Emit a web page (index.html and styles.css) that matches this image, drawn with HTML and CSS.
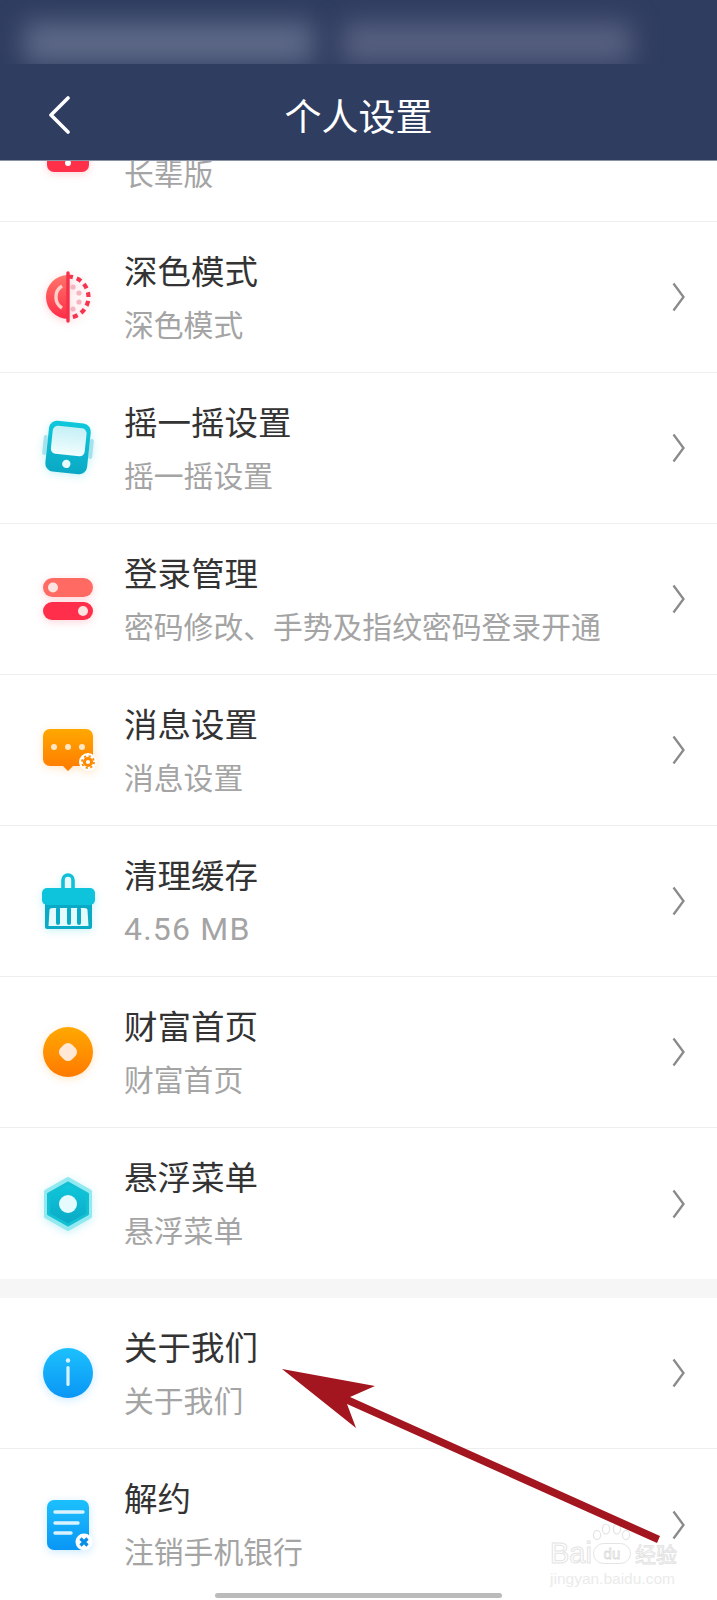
FILE: index.html
```html
<!DOCTYPE html>
<html>
<head>
    <title>个人设置</title>
    <link rel="stylesheet" href="styles.css">
</head>
<body>
<div class="page">
    <svg width="0" height="0" class="defs">
        <defs>
            <linearGradient id="red" x1="0" y1="0" x2="0" y2="1"><stop offset="0" stop-color="#ff7469"/><stop offset="1" stop-color="#ff2d49"/></linearGradient>
            <linearGradient id="teal" x1="0" y1="0" x2="0" y2="1"><stop offset="0" stop-color="#0fc8dc"/><stop offset="1" stop-color="#0ba8c4"/></linearGradient>
            <linearGradient id="screen" x1="0" y1="0" x2="0" y2="1"><stop offset="0" stop-color="#c4f0f6"/><stop offset="1" stop-color="#f2fdfe"/></linearGradient>
            <linearGradient id="orange" x1="0" y1="0" x2="0" y2="1"><stop offset="0" stop-color="#ffa800"/><stop offset="1" stop-color="#ff7a00"/></linearGradient>
            <linearGradient id="blue" x1="0" y1="0" x2="0" y2="1"><stop offset="0" stop-color="#1cc0fd"/><stop offset="1" stop-color="#0a96f5"/></linearGradient>
        </defs>
    </svg>

    <header class="topbar">
        <div class="status">
            <div class="smear smear-left"></div>
            <div class="smear smear-right"></div>
        </div>
        <div class="nav">
            <svg class="back" width="24" height="38" viewBox="0 0 24 38"><path d="M21 2 L4 19 L21 36" fill="none" stroke="#fff" stroke-width="3.6" stroke-linecap="round" stroke-linejoin="round"/></svg>
            <div class="nav-title">个人设置</div>
        </div>
    </header>

    <div class="list">
        <div class="row">
            <svg class="icon glow-red" width="60" height="60" viewBox="0 0 60 60"><rect x="9" y="4" width="42" height="52" rx="7" fill="#ff304a"/><circle cx="30" cy="47" r="3" fill="#fff"/></svg>
            <div class="text"><div class="name">长辈模式</div><div class="sub">长辈版</div></div>
            <svg class="chev" width="13" height="30" viewBox="0 0 13 30"><path d="M1.5 1.5 L11.5 15 L1.5 28.5" fill="none" stroke="#8a8a8a" stroke-width="2.3"/></svg>
        </div>

        <div class="row">
            <svg class="icon glow-red" width="60" height="60" viewBox="0 0 60 60">
                <path d="M30 8 A22 22 0 0 0 30 52 Z" fill="url(#red)"/>
                <path d="M30 6 V54" stroke="#f5304a" stroke-width="3.4" stroke-linecap="round"/>
                <path d="M24 19 A13 13 0 0 0 24 41" fill="none" stroke="#ffd0c8" stroke-width="3.4"/>
                <path d="M30 9.5 A20.5 20.5 0 0 1 30 50.5" fill="none" stroke="#f5354f" stroke-width="4.2" stroke-dasharray="5 4"/>
                <circle cx="35" cy="20" r="2.6" fill="#f5b5c0"/><circle cx="41" cy="26" r="2.6" fill="#f5b5c0"/><circle cx="41" cy="35" r="2.6" fill="#f5b5c0"/><circle cx="35" cy="42" r="2.6" fill="#f5b5c0"/>
            </svg>
            <div class="text"><div class="name">深色模式</div><div class="sub">深色模式</div></div>
            <svg class="chev" width="13" height="30" viewBox="0 0 13 30"><path d="M1.5 1.5 L11.5 15 L1.5 28.5" fill="none" stroke="#8a8a8a" stroke-width="2.3"/></svg>
        </div>

        <div class="row">
            <svg class="icon glow-teal" width="60" height="60" viewBox="0 0 60 60">
                <rect x="5" y="17" width="4" height="20" rx="2" fill="#a5e3ec" transform="rotate(6 7 27)"/>
                <rect x="51" y="21" width="4" height="20" rx="2" fill="#a5e3ec" transform="rotate(6 53 31)"/>
                <g transform="rotate(6 30 30)">
                    <rect x="9" y="4" width="42" height="51" rx="8" fill="url(#teal)"/>
                    <rect x="13" y="9" width="34" height="28" rx="5" fill="url(#screen)"/>
                    <circle cx="30" cy="46" r="4.2" fill="#e8fbfd"/>
                </g>
            </svg>
            <div class="text"><div class="name">摇一摇设置</div><div class="sub">摇一摇设置</div></div>
            <svg class="chev" width="13" height="30" viewBox="0 0 13 30"><path d="M1.5 1.5 L11.5 15 L1.5 28.5" fill="none" stroke="#8a8a8a" stroke-width="2.3"/></svg>
        </div>

        <div class="row">
            <svg class="icon glow-red" width="60" height="60" viewBox="0 0 60 60">
                <rect x="5" y="9" width="50" height="19" rx="9.5" fill="#ff6a63"/>
                <circle cx="15" cy="18.5" r="5" fill="#fbe3e1"/>
                <rect x="5" y="33" width="50" height="18" rx="9" fill="#ff2f4b"/>
                <circle cx="45" cy="42" r="5" fill="#fbe3e1"/>
            </svg>
            <div class="text"><div class="name">登录管理</div><div class="sub">密码修改、手势及指纹密码登录开通</div></div>
            <svg class="chev" width="13" height="30" viewBox="0 0 13 30"><path d="M1.5 1.5 L11.5 15 L1.5 28.5" fill="none" stroke="#8a8a8a" stroke-width="2.3"/></svg>
        </div>

        <div class="row">
            <svg class="icon glow-orange" width="60" height="60" viewBox="0 0 60 60">
                <path d="M12 9 H48 A7 7 0 0 1 55 16 V39 A7 7 0 0 1 48 46 H35 L30 51 L25 46 H12 A7 7 0 0 1 5 39 V16 A7 7 0 0 1 12 9 Z" fill="url(#orange)"/>
                <circle cx="16" cy="27" r="3" fill="#ffe6c4"/><circle cx="30" cy="27" r="3" fill="#ffe6c4"/><circle cx="44" cy="27" r="3" fill="#ffe6c4"/>
                <circle cx="50" cy="42" r="9" fill="#fff"/>
                <circle cx="50" cy="42" r="3.6" fill="none" stroke="#ff8a00" stroke-width="3"/>
                <circle cx="50" cy="42" r="6" fill="none" stroke="#ff8a00" stroke-width="1.8" stroke-dasharray="2.2 2.5"/>
            </svg>
            <div class="text"><div class="name">消息设置</div><div class="sub">消息设置</div></div>
            <svg class="chev" width="13" height="30" viewBox="0 0 13 30"><path d="M1.5 1.5 L11.5 15 L1.5 28.5" fill="none" stroke="#8a8a8a" stroke-width="2.3"/></svg>
        </div>

        <div class="row">
            <svg class="icon glow-teal" width="60" height="60" viewBox="0 0 60 60">
                <path d="M25 18 V9 A5 5 0 0 1 35 9 V18" fill="none" stroke="#0fc0d8" stroke-width="3.6"/>
                <rect x="7" y="30" width="47" height="28" rx="2" fill="#0aa9c6"/>
                <rect x="4" y="17" width="53" height="17" rx="5" fill="#0ec4dc"/>
                <path d="M10.5 55 L11.5 39 Q11.5 37 15 37 H46 Q49.5 37 49.5 39 L50.5 55 Z" fill="#e4fbfd"/>
                <path d="M20 38 V52 M31 38 V52 M41 38 V52" stroke="#0aa9c6" stroke-width="4" stroke-linecap="round"/>
            </svg>
            <div class="text"><div class="name">清理缓存</div><div class="sub sub-num">4.56 MB</div></div>
            <svg class="chev" width="13" height="30" viewBox="0 0 13 30"><path d="M1.5 1.5 L11.5 15 L1.5 28.5" fill="none" stroke="#8a8a8a" stroke-width="2.3"/></svg>
        </div>

        <div class="row">
            <svg class="icon glow-orange" width="60" height="60" viewBox="0 0 60 60">
                <circle cx="30" cy="30" r="25" fill="url(#orange)"/>
                <rect x="22" y="22" width="16" height="16" rx="5.5" fill="#ffe9d6" transform="rotate(45 30 30)"/>
            </svg>
            <div class="text"><div class="name">财富首页</div><div class="sub">财富首页</div></div>
            <svg class="chev" width="13" height="30" viewBox="0 0 13 30"><path d="M1.5 1.5 L11.5 15 L1.5 28.5" fill="none" stroke="#8a8a8a" stroke-width="2.3"/></svg>
        </div>

        <div class="row row-end">
            <svg class="icon glow-teal" width="60" height="60" viewBox="0 0 60 60">
                <path d="M30 5 L52 17.5 V42.5 L30 55 L8 42.5 V17.5 Z" fill="#93e9f0" stroke="#93e9f0" stroke-width="4" stroke-linejoin="round"/>
                <path d="M30 9 L49.5 20 V40 L30 51 L10.5 40 V20 Z" fill="url(#teal)" stroke="#12bfd3" stroke-width="3" stroke-linejoin="round"/>
                <circle cx="30" cy="30" r="9" fill="#e6fbfd"/>
            </svg>
            <div class="text"><div class="name">悬浮菜单</div><div class="sub">悬浮菜单</div></div>
            <svg class="chev" width="13" height="30" viewBox="0 0 13 30"><path d="M1.5 1.5 L11.5 15 L1.5 28.5" fill="none" stroke="#8a8a8a" stroke-width="2.3"/></svg>
        </div>

        <div class="gap"></div>

        <div class="row">
            <svg class="icon glow-blue" width="60" height="60" viewBox="0 0 60 60">
                <circle cx="30" cy="30" r="25" fill="url(#blue)"/>
                <circle cx="30" cy="17.5" r="2.2" fill="#d8f3ff"/>
                <rect x="28.4" y="23" width="3.2" height="20" rx="1.6" fill="#d8f3ff"/>
            </svg>
            <div class="text"><div class="name">关于我们</div><div class="sub">关于我们</div></div>
            <svg class="chev" width="13" height="30" viewBox="0 0 13 30"><path d="M1.5 1.5 L11.5 15 L1.5 28.5" fill="none" stroke="#8a8a8a" stroke-width="2.3"/></svg>
        </div>

        <div class="row row-end">
            <svg class="icon glow-blue" width="60" height="60" viewBox="0 0 60 60">
                <rect x="9" y="5" width="42" height="50" rx="7" fill="url(#blue)"/>
                <path d="M17 17 H45 M17 28 H40 M17 38 H33" stroke="#d8f3ff" stroke-width="3.4" stroke-linecap="round"/>
                <circle cx="46" cy="47" r="8.5" fill="#fff"/>
                <path d="M42.5 43.5 L49.5 50.5 M49.5 43.5 L42.5 50.5" stroke="#0a8fe8" stroke-width="3.2"/>
            </svg>
            <div class="text"><div class="name">解约</div><div class="sub">注销手机银行</div></div>
            <svg class="chev" width="13" height="30" viewBox="0 0 13 30"><path d="M1.5 1.5 L11.5 15 L1.5 28.5" fill="none" stroke="#8a8a8a" stroke-width="2.3"/></svg>
        </div>
    </div>

    <div class="home-bar"></div>

    <div class="watermark">
        <svg class="paw" width="40" height="18" viewBox="0 0 40 18">
            <g fill="none" stroke="#e4e4e4" stroke-width="1.2">
                <ellipse cx="5" cy="12" rx="3.6" ry="4.6"/><ellipse cx="14" cy="6" rx="3.6" ry="5"/><ellipse cx="25" cy="6" rx="3.6" ry="5"/><ellipse cx="34" cy="12" rx="3.6" ry="4.6"/>
            </g>
        </svg>
        <div class="wm-brand">
            <span class="wm-bai">Bai</span>
            <span class="wm-du">du</span>
            <span class="wm-jy">经验</span>
        </div>
        <div class="wm-url">jingyan.baidu.com</div>
    </div>

    <svg class="arrow" width="717" height="1600" viewBox="0 0 717 1600">
        <path d="M282 1369 L375 1386 L350 1397 L660 1536 L657 1543 L347 1404 L356 1428 Z" fill="#a3151f"/>
    </svg>
</div>
</body>
</html>
```

FILE: styles.css
```css
html, body {
    margin: 0;
    padding: 0;
    background-color: #fff;
}
.page {
    position: relative;
    width: 717px;
    height: 1600px;
    overflow: hidden;
    font-family: "Noto Sans CJK SC", "Noto Sans", sans-serif;
    background-color: #fff;
}
.defs {
    position: absolute;
}
.topbar {
    position: relative;
    z-index: 2;
    background-color: #2f3d60;
    border-bottom: 1px solid #8a93a6;
}
.status {
    display: flex;
    gap: 28px;
    height: 64px;
    padding: 0 70px 0 24px;
    overflow: hidden;
    box-sizing: border-box;
}
.smear {
    width: 290px;
    height: 42px;
    margin-top: 22px;
    background-color: #5d6987;
    filter: blur(13px);
}
.smear-right {
    background-color: #565f7f;
}
.nav {
    display: grid;
    grid-template-columns: 1fr auto 1fr;
    align-items: center;
    height: 96px;
    padding: 6px 0 0 47px;
    box-sizing: border-box;
}
.back {
    display: block;
}
.nav-title {
    color: #fff;
    font-size: 37px;
    line-height: 50px;
    padding-right: 47px;
}
.list {
    margin-top: -90px;
}
.row {
    display: flex;
    align-items: center;
    height: 151px;
    box-sizing: border-box;
    padding: 0 32px 0 38px;
    border-bottom: 1.5px solid #eeeeee;
}
.row-end {
    border-bottom: none;
}
.icon {
    display: block;
    flex: none;
}
.glow-red {
    filter: drop-shadow(0 2px 4px rgba(255, 60, 80, 0.22));
}
.glow-teal {
    filter: drop-shadow(0 2px 4px rgba(15, 195, 220, 0.22));
}
.glow-orange {
    filter: drop-shadow(0 2px 4px rgba(255, 140, 0, 0.22));
}
.glow-blue {
    filter: drop-shadow(0 2px 4px rgba(20, 160, 250, 0.22));
}
.text {
    flex: 1;
    margin: -3px 0 0 26px;
}
.name {
    color: #333;
    font-size: 33.5px;
    line-height: 52px;
}
.sub {
    color: #a4a4a4;
    font-size: 29.8px;
    line-height: 50px;
    margin-top: 2px;
}
.sub-num {
    font-family: Roboto, sans-serif;
    font-size: 32px;
    letter-spacing: 1.2px;
    padding-top: 2px;
    margin-bottom: -2px;
}
.chev {
    display: block;
    flex: none;
}
.gap {
    height: 19px;
    background-color: #f6f6f6;
}
.home-bar {
    position: absolute;
    left: 215px;
    bottom: 2px;
    width: 287px;
    height: 5px;
    border-radius: 3px;
    background-color: #bbb;
}
.watermark {
    position: absolute;
    left: 550px;
    top: 1523px;
    width: 130px;
}
.paw {
    display: block;
    margin-left: 42px;
}
.wm-brand {
    display: flex;
    align-items: center;
    height: 24px;
    white-space: nowrap;
}
.wm-bai {
    font-family: "Liberation Sans", sans-serif;
    font-size: 29px;
    color: #fff;
    -webkit-text-stroke: 1px #e4e4e4;
}
.wm-du {
    width: 36px;
    height: 19px;
    margin-left: 1px;
    border: 1px solid #e4e4e4;
    border-radius: 11px;
    text-align: center;
    font-family: "Liberation Sans", sans-serif;
    font-size: 15px;
    line-height: 19px;
    color: #fff;
    -webkit-text-stroke: 0.8px #dcdcdc;
}
.wm-jy {
    margin-left: 4px;
    font-size: 21px;
    line-height: 24px;
    color: #fff;
    -webkit-text-stroke: 0.8px #e0e0e0;
}
.wm-url {
    margin-top: 6px;
    font-family: "Liberation Sans", sans-serif;
    font-size: 15.5px;
    line-height: 16px;
    color: #ebebeb;
    white-space: nowrap;
}
.arrow {
    position: absolute;
    left: 0;
    top: 0;
    z-index: 3;
}
```
